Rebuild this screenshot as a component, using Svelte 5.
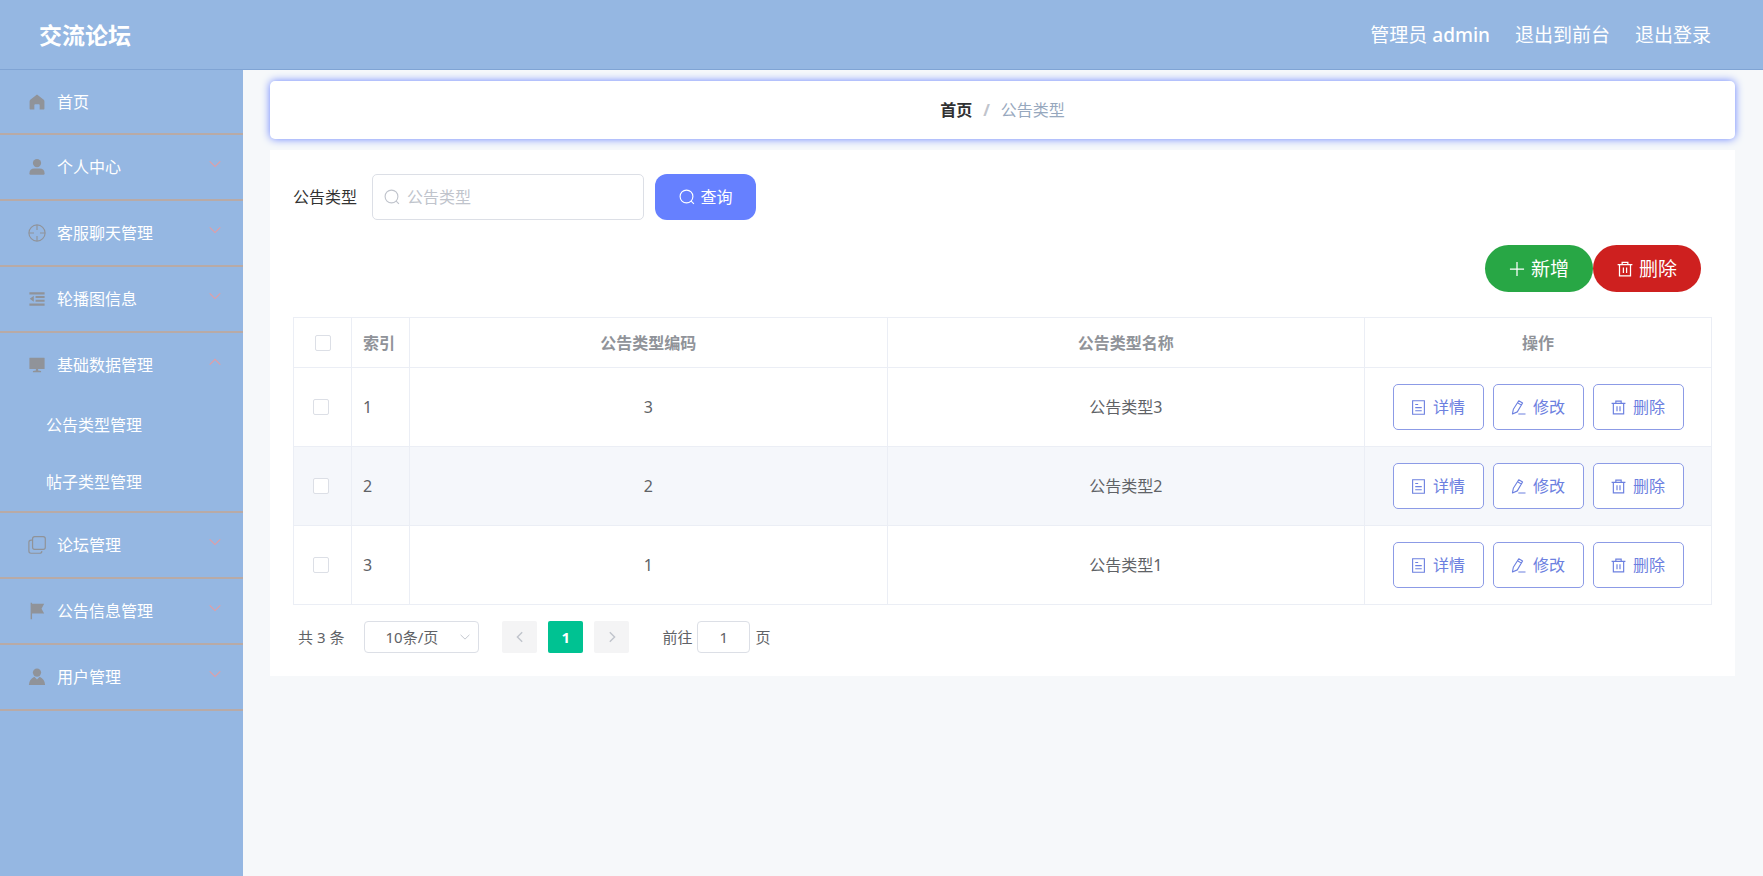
<script lang="ts">
  type MenuItem = {
    label: string;
    icon: string;
    children?: string[];
    leaf?: boolean;
  };

  // Element UI icon shapes on a 1024 grid
  const ICONS: Record<string, string> = {
    home: `<path fill="currentColor" d="M512 90 L130 390 Q90 425 90 470 V900 Q90 940 130 940 H360 V690 Q360 640 410 640 H614 Q664 640 664 690 V940 H894 Q934 940 934 900 V470 Q934 425 894 390 Z"/>`,
    user: `<circle fill="currentColor" cx="512" cy="290" r="235"/><path fill="currentColor" d="M80 880 Q80 600 370 600 H654 Q944 600 944 880 Q944 950 884 950 H140 Q80 950 80 880Z"/>`,
    aim: `<g fill="none" stroke="currentColor" stroke-width="64"><circle cx="512" cy="512" r="460"/><path d="M512 52v290M512 682v290M52 512h290M682 512h290"/></g>`,
    fold: `<path fill="currentColor" d="M80 130h864v120H80zM430 340h514v120H430zM430 550h514v120H430zM80 770h864v120H80zM100 503l230-170v340z"/>`,
    monitor: `<path fill="currentColor" d="M100 100h824q20 0 20 20v600q0 20-20 20H100q-20 0-20-20V120q0-20 20-20zM450 740h124v80l170 40v60H280v-60l170-40z"/>`,
    copy: `<g fill="none" stroke="currentColor" stroke-width="68"><rect x="260" y="40" width="724" height="724" rx="120"/><path d="M260 230H180Q50 230 50 350v510q0 120 120 120h500q110 0 120-120"/></g>`,
    flag: `<path fill="currentColor" d="M150 40h80v60h690L770 380l150 280H230v320h-80z"/>`,
    custom: `<circle fill="currentColor" cx="512" cy="260" r="235"/><path fill="currentColor" d="M50 960Q70 640 360 500l152 150 152-150Q954 640 974 960Z"/>`,
    search: `<g fill="none" stroke="currentColor" stroke-width="72"><circle cx="480" cy="480" r="410"/><path d="M765 765l190 190"/></g>`,
    plus: `<path fill="none" stroke="currentColor" stroke-width="80" d="M512 60v904M60 512h904"/>`,
    trash: `<path fill="none" stroke="currentColor" stroke-width="80" d="M40 230h944M160 230v720h704V230M330 230V80h364v150M410 420v350M614 420v350"/>`,
    document: `<path fill="none" stroke="currentColor" stroke-width="76" d="M110 50h804v924H110zM290 310h200M290 520h444M290 730h444"/>`,
    edit: `<path fill="none" stroke="currentColor" stroke-width="76" stroke-linejoin="round" d="M530 50l260 160-360 600-330 140 60-320zM450 190l260 160M500 960h490"/>`,
    down: `<path fill="none" stroke="currentColor" stroke-width="96" d="M60 290l452 440 452-440"/>`,
    up: `<path fill="none" stroke="currentColor" stroke-width="96" d="M60 730l452-440 452 440"/>`,
    left: `<path fill="none" stroke="currentColor" stroke-width="120" d="M700 110L290 512l410 402"/>`,
    right: `<path fill="none" stroke="currentColor" stroke-width="120" d="M324 110l410 402-410 402"/>`,
  };

  const MENU: MenuItem[] = [
    { label: '首页', icon: 'home', leaf: true },
    { label: '个人中心', icon: 'user' },
    { label: '客服聊天管理', icon: 'aim' },
    { label: '轮播图信息', icon: 'fold' },
    { label: '基础数据管理', icon: 'monitor', children: ['公告类型管理', '帖子类型管理'] },
    { label: '论坛管理', icon: 'copy' },
    { label: '公告信息管理', icon: 'flag' },
    { label: '用户管理', icon: 'custom' },
  ];

  const ACTIONS = [
    { label: '详情', icon: 'document' },
    { label: '修改', icon: 'edit' },
    { label: '删除', icon: 'trash' },
  ];

  let rows = $state([
    { code: 3, name: '公告类型3', checked: false },
    { code: 2, name: '公告类型2', checked: false },
    { code: 1, name: '公告类型1', checked: false },
  ]);
  let keyword = $state('');
  let page = $state('1');
  let allChecked = $derived(rows.every((row) => row.checked));

  function toggleAll(): void {
    const next = !allChecked;
    rows.forEach((row) => (row.checked = next));
  }
</script>

{#snippet icon(name: string)}
  <svg class="icon" viewBox="0 0 1024 1024" aria-hidden="true">{@html ICONS[name]}</svg>
{/snippet}

<div class="layout">
  <header class="header">
    <h1 class="title">交流论坛</h1>
    <div class="header-right">
      <span>管理员 <span class="username">admin</span></span>
      <a href="#/front">退出到前台</a>
      <a href="#/login">退出登录</a>
    </div>
  </header>

  <div class="body">
    <nav class="sidebar">
      {#each MENU as item}
        <div class="menu-group">
          {#if item.leaf}
            <a class="menu-item leaf" href="#/">
              {@render icon(item.icon)}
              <span class="menu-label">{item.label}</span>
            </a>
          {:else}
            <button class="menu-item" aria-expanded={!!item.children}>
              {@render icon(item.icon)}
              <span class="menu-label">{item.label}</span>
              <span class="menu-arrow">{@render icon(item.children ? 'up' : 'down')}</span>
            </button>
          {/if}
          {#each item.children ?? [] as child}
            <a class="submenu-item" href="#/{child}">{child}</a>
          {/each}
        </div>
      {/each}
    </nav>

    <main class="main">
      <div class="breadcrumb">
        <a href="#/">首页</a>
        <span class="separator">/</span>
        <span>公告类型</span>
      </div>

      <section class="card">
        <form class="search" onsubmit={(e) => e.preventDefault()}>
          <label for="keyword">公告类型</label>
          <div class="search-box">
            {@render icon('search')}
            <input id="keyword" type="text" placeholder="公告类型" bind:value={keyword} />
          </div>
          <button class="btn-query">{@render icon('search')}查询</button>
        </form>

        <div class="toolbar">
          <button class="btn-round add">{@render icon('plus')}新增</button>
          <button class="btn-round remove">{@render icon('trash')}删除</button>
        </div>

        <table>
          <colgroup>
            <col class="col-small" />
            <col class="col-small" />
            <col />
            <col />
            <col class="col-actions" />
          </colgroup>
          <thead>
            <tr>
              <th class="check"><input type="checkbox" aria-label="全选" checked={allChecked} onchange={toggleAll} /></th>
              <th class="index">索引</th>
              <th>公告类型编码</th>
              <th>公告类型名称</th>
              <th>操作</th>
            </tr>
          </thead>
          <tbody>
            {#each rows as row, i}
              <tr>
                <td class="check"><input type="checkbox" aria-label={row.name} bind:checked={row.checked} /></td>
                <td class="index">{i + 1}</td>
                <td>{row.code}</td>
                <td>{row.name}</td>
                <td>
                  <div class="actions">
                    {#each ACTIONS as action}
                      <button class="btn-action">{@render icon(action.icon)}{action.label}</button>
                    {/each}
                  </div>
                </td>
              </tr>
            {/each}
          </tbody>
        </table>

        <div class="pagination">
          <span class="total">共 {rows.length} 条</span>
          <div class="sizes">
            <select aria-label="每页条数">
              <option>10条/页</option>
              <option>20条/页</option>
              <option>50条/页</option>
            </select>
            <span class="sizes-arrow">{@render icon('down')}</span>
          </div>
          <div class="pager">
            <button disabled aria-label="上一页">{@render icon('left')}</button>
            <button class="active">1</button>
            <button disabled aria-label="下一页">{@render icon('right')}</button>
          </div>
          <label class="jump">前往<input type="text" bind:value={page} />页</label>
        </div>
      </section>
    </main>
  </div>
</div>

<style>
  :global(body) {
    background: #f6f8fa;
  }

  .layout {
    min-height: 100vh;
    display: flex;
    flex-direction: column;
    font-family: 'Noto Sans', 'Noto Sans CJK SC', sans-serif;
    font-size: 16px;
    line-height: 24px;
    color: #606266;
  }

  a,
  button,
  input,
  select {
    font: inherit;
    color: inherit;
    text-decoration: none;
    box-sizing: border-box;
  }

  button {
    border: none;
    background: none;
    padding: 0;
    cursor: pointer;
  }

  .icon {
    width: 16px;
    height: 16px;
    flex-shrink: 0;
  }

  .header {
    height: 70px;
    box-sizing: border-box;
    border-bottom: 1px solid #80a4d4;
    background: #95b7e2;
    padding: 0 52px 0 39px;
    display: flex;
    align-items: center;
    justify-content: space-between;
    color: #fff;
  }

  .title {
    margin: 0;
    font-size: 23px;
    font-weight: 700;
  }

  .header-right {
    display: flex;
    gap: 25px;
    font-size: 19px;
  }

  .username {
    font-weight: 500;
  }

  .body {
    flex: 1;
    display: flex;
  }

  .sidebar {
    width: 243px;
    flex-shrink: 0;
    background: #95b7e2;
    color: #fff;
  }

  .menu-group {
    border-bottom: 2px solid #b8aaa6;
  }

  .menu-item {
    width: 100%;
    height: 64px;
    padding: 0 22px 0 28px;
    display: flex;
    align-items: center;
    gap: 11px;
    text-align: left;
  }

  .menu-item.leaf {
    height: 63px;
  }

  .menu-item > .icon {
    width: 18px;
    height: 18px;
    color: #909399;
  }

  .menu-label {
    flex: 1;
  }

  .menu-arrow {
    display: flex;
    color: #e59da2;
    padding-bottom: 6px;
  }

  .menu-arrow .icon {
    width: 12px;
    height: 12px;
  }

  .submenu-item {
    display: block;
    height: 57px;
    padding-left: 46px;
    line-height: 57px;
  }

  .main {
    flex: 1;
    min-width: 0;
    padding: 11px 28px 28px 27px;
  }

  .breadcrumb {
    height: 58px;
    margin-bottom: 11px;
    border-radius: 5px;
    background: #fff;
    box-shadow: 0 0 9px #6680ff;
    display: flex;
    align-items: center;
    justify-content: center;
    gap: 11px;
    color: #97a8be;
  }

  .breadcrumb a {
    font-weight: 700;
    color: #303133;
  }

  .separator {
    font-weight: 700;
    color: #c0c4cc;
  }

  .card {
    background: #fff;
    padding: 24px 23px 23px;
  }

  .search {
    display: flex;
    align-items: center;
  }

  .search label {
    color: #333;
    margin-right: 15px;
  }

  .search-box {
    width: 272px;
    height: 46px;
    box-sizing: border-box;
    border: 1px solid #dcdfe6;
    border-radius: 5px;
    padding: 0 11px;
    display: flex;
    align-items: center;
    gap: 7px;
    color: #c0c4cc;
  }

  .search-box input {
    flex: 1;
    min-width: 0;
    border: none;
    outline: none;
    padding: 0;
    color: #606266;
  }

  .search-box input::placeholder {
    color: #c0c4cc;
  }

  .btn-query {
    width: 101px;
    height: 46px;
    margin-left: 11px;
    border-radius: 12px;
    background: #6680ff;
    color: #fff;
    display: flex;
    align-items: center;
    justify-content: center;
    gap: 6px;
  }

  .toolbar {
    display: flex;
    justify-content: flex-end;
    padding: 25px 11px 25px 0;
  }

  .btn-round {
    width: 108px;
    height: 47px;
    border-radius: 24px;
    font-size: 19px;
    color: #fff;
    display: flex;
    align-items: center;
    justify-content: center;
    gap: 6px;
  }

  .add {
    background: #28a745;
  }

  .remove {
    background: #ce201f;
  }

  table {
    width: 100%;
    table-layout: fixed;
    border-collapse: collapse;
  }

  .col-small {
    width: 58px;
  }

  .col-actions {
    width: 347px;
  }

  th,
  td {
    border: 1px solid #ebeef5;
    padding: 0;
    text-align: center;
  }

  th {
    height: 49px;
    color: #909399;
    font-weight: 700;
  }

  td {
    height: 78px;
  }

  tbody tr:nth-child(even) {
    background: #f5f7fb;
  }

  .index {
    padding-left: 11px;
    text-align: left;
  }

  .check {
    line-height: 0;
  }

  td.check {
    padding-right: 4px;
  }

  .check input {
    appearance: none;
    width: 16px;
    height: 16px;
    margin: 0;
    border: 1px solid #dcdfe6;
    border-radius: 2px;
    background: #fff;
  }

  .check input:checked {
    background: #6680ff;
  }

  .actions {
    display: flex;
    justify-content: center;
    gap: 9px;
  }

  .btn-action {
    width: 91px;
    height: 46px;
    border: 1px solid #8c9be6;
    border-radius: 5px;
    background: #fff;
    color: #6c80e0;
    display: flex;
    align-items: center;
    justify-content: center;
    gap: 7px;
  }

  .btn-action .icon {
    width: 15px;
    height: 15px;
  }

  .pagination {
    display: flex;
    align-items: center;
    padding: 16px 5px 0;
    font-size: 15px;
  }

  .sizes {
    position: relative;
    margin-left: 20px;
  }

  .sizes select {
    appearance: none;
    display: block;
    width: 115px;
    height: 32px;
    border: 1px solid #dcdfe6;
    border-radius: 4px;
    background: #fff;
    padding: 0 20px 0 0;
    text-align: center;
    text-align-last: center;
  }

  .sizes-arrow {
    position: absolute;
    top: 11px;
    right: 9px;
    display: flex;
    color: #c0c4cc;
    pointer-events: none;
  }

  .sizes-arrow .icon {
    width: 10px;
    height: 10px;
  }

  .pager {
    display: flex;
    gap: 11px;
    margin: 0 33px 0 23px;
  }

  .pager button {
    width: 35px;
    height: 32px;
    border-radius: 2px;
    background: #f4f4f5;
    display: flex;
    align-items: center;
    justify-content: center;
    font-weight: 700;
    color: #c0c4cc;
  }

  .pager button.active {
    background: #00c292;
    color: #fff;
  }

  .pager .icon {
    width: 12px;
    height: 12px;
  }

  .jump {
    display: flex;
    align-items: center;
    gap: 5px;
  }

  .jump input {
    width: 53px;
    height: 32px;
    border: 1px solid #dcdfe6;
    border-radius: 4px;
    padding: 0;
    text-align: center;
  }
</style>
